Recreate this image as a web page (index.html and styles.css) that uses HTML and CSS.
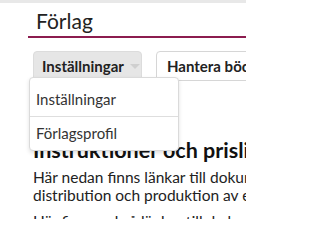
FILE: index.html
```html
<!DOCTYPE html>
<html lang="sv">
<head>
<meta charset="utf-8">
<link rel="stylesheet" href="styles.css">
</head>
<body>
<div class="viewport">
  <div class="topbar"></div>
  <div class="page">
    <h1 class="title">Förlag</h1>
    <div class="toolbar">
      <div class="menu-wrap">
        <button class="btn btn-active">Inställningar <span class="caret"></span></button>
        <ul class="dropdown">
          <li>Inställningar</li>
          <li>Förlagsprofil</li>
        </ul>
      </div>
      <button class="btn btn-plain">Hantera böcker</button>
    </div>
    <div class="content">
      <h2 class="heading">Instruktioner och prislistor</h2>
      <p class="text">Här nedan finns länkar till dokument som rör<br>distribution och produktion av e-böcker.</p>
      <p class="text">Här finns också länkar till de krav som gäller.</p>
    </div>
  </div>
</div>
</body>
</html>
```
FILE: styles.css
```css
html, body {
  margin: 0;
  padding: 0;
  background: #fff;
}
body {
  font-family: "Lato", "Open Sans", sans-serif;
  color: #222;
}
.viewport {
  width: 246px;
  height: 219px;
  overflow: hidden;
  position: relative;
}
.topbar {
  height: 3px;
  background: #e8e8e8;
}
.page {
  padding-left: 28px;
  width: 400px;
}
.title {
  margin: 0;
  padding: 6px 0 3px 8px;
  font-size: 21px;
  font-weight: 400;
  line-height: 24px;
  border-bottom: 2px solid #8c1c4f;
  white-space: nowrap;
}
.toolbar {
  display: flex;
  gap: 14px;
  margin: 13px 0 0 5px;
  white-space: nowrap;
}
.menu-wrap {
  position: relative;
}
.btn {
  font-family: inherit;
  font-size: 15px;
  font-weight: 700;
  color: #222;
  height: 30px;
  padding: 0 8px;
  border-radius: 4px;
  display: flex;
  align-items: center;
  gap: 6px;
}
.btn-active {
  width: 109px;
  background: #e6e6e6;
  border: 1px solid #dcdcdc;
}
.btn-plain {
  padding: 0 10px;
  background: #fff;
  border: 1px solid #d6d6d6;
}
.caret {
  width: 0;
  height: 0;
  border-left: 5px solid transparent;
  border-right: 5px solid transparent;
  border-top: 5px solid #cfcfcf;
}
.dropdown {
  position: absolute;
  left: -4px;
  top: 26px;
  width: 148px;
  margin: 0;
  padding: 4px 0 0;
  list-style: none;
  background: #fff;
  border: 1px solid #dadada;
  border-radius: 4px;
  box-shadow: 0 2px 4px rgba(0,0,0,0.12);
  z-index: 2;
}
.dropdown li {
  font-size: 15px;
  height: 34px;
  line-height: 34px;
  padding-left: 6px;
  color: #333;
}
.dropdown li + li {
  height: 33px;
  line-height: 33px;
  border-top: 1px solid #dedede;
}
.content {
  padding-left: 5px;
  white-space: nowrap;
}
.heading {
  margin: 56px 0 0;
  font-size: 21.5px;
  line-height: 26px;
  font-weight: 700;
  color: #111;
}
.text {
  margin: 5px 0 0;
  font-size: 15.5px;
  line-height: 18px;
  color: #222;
}
.text + .text {
  margin-top: 8px;
}
```
